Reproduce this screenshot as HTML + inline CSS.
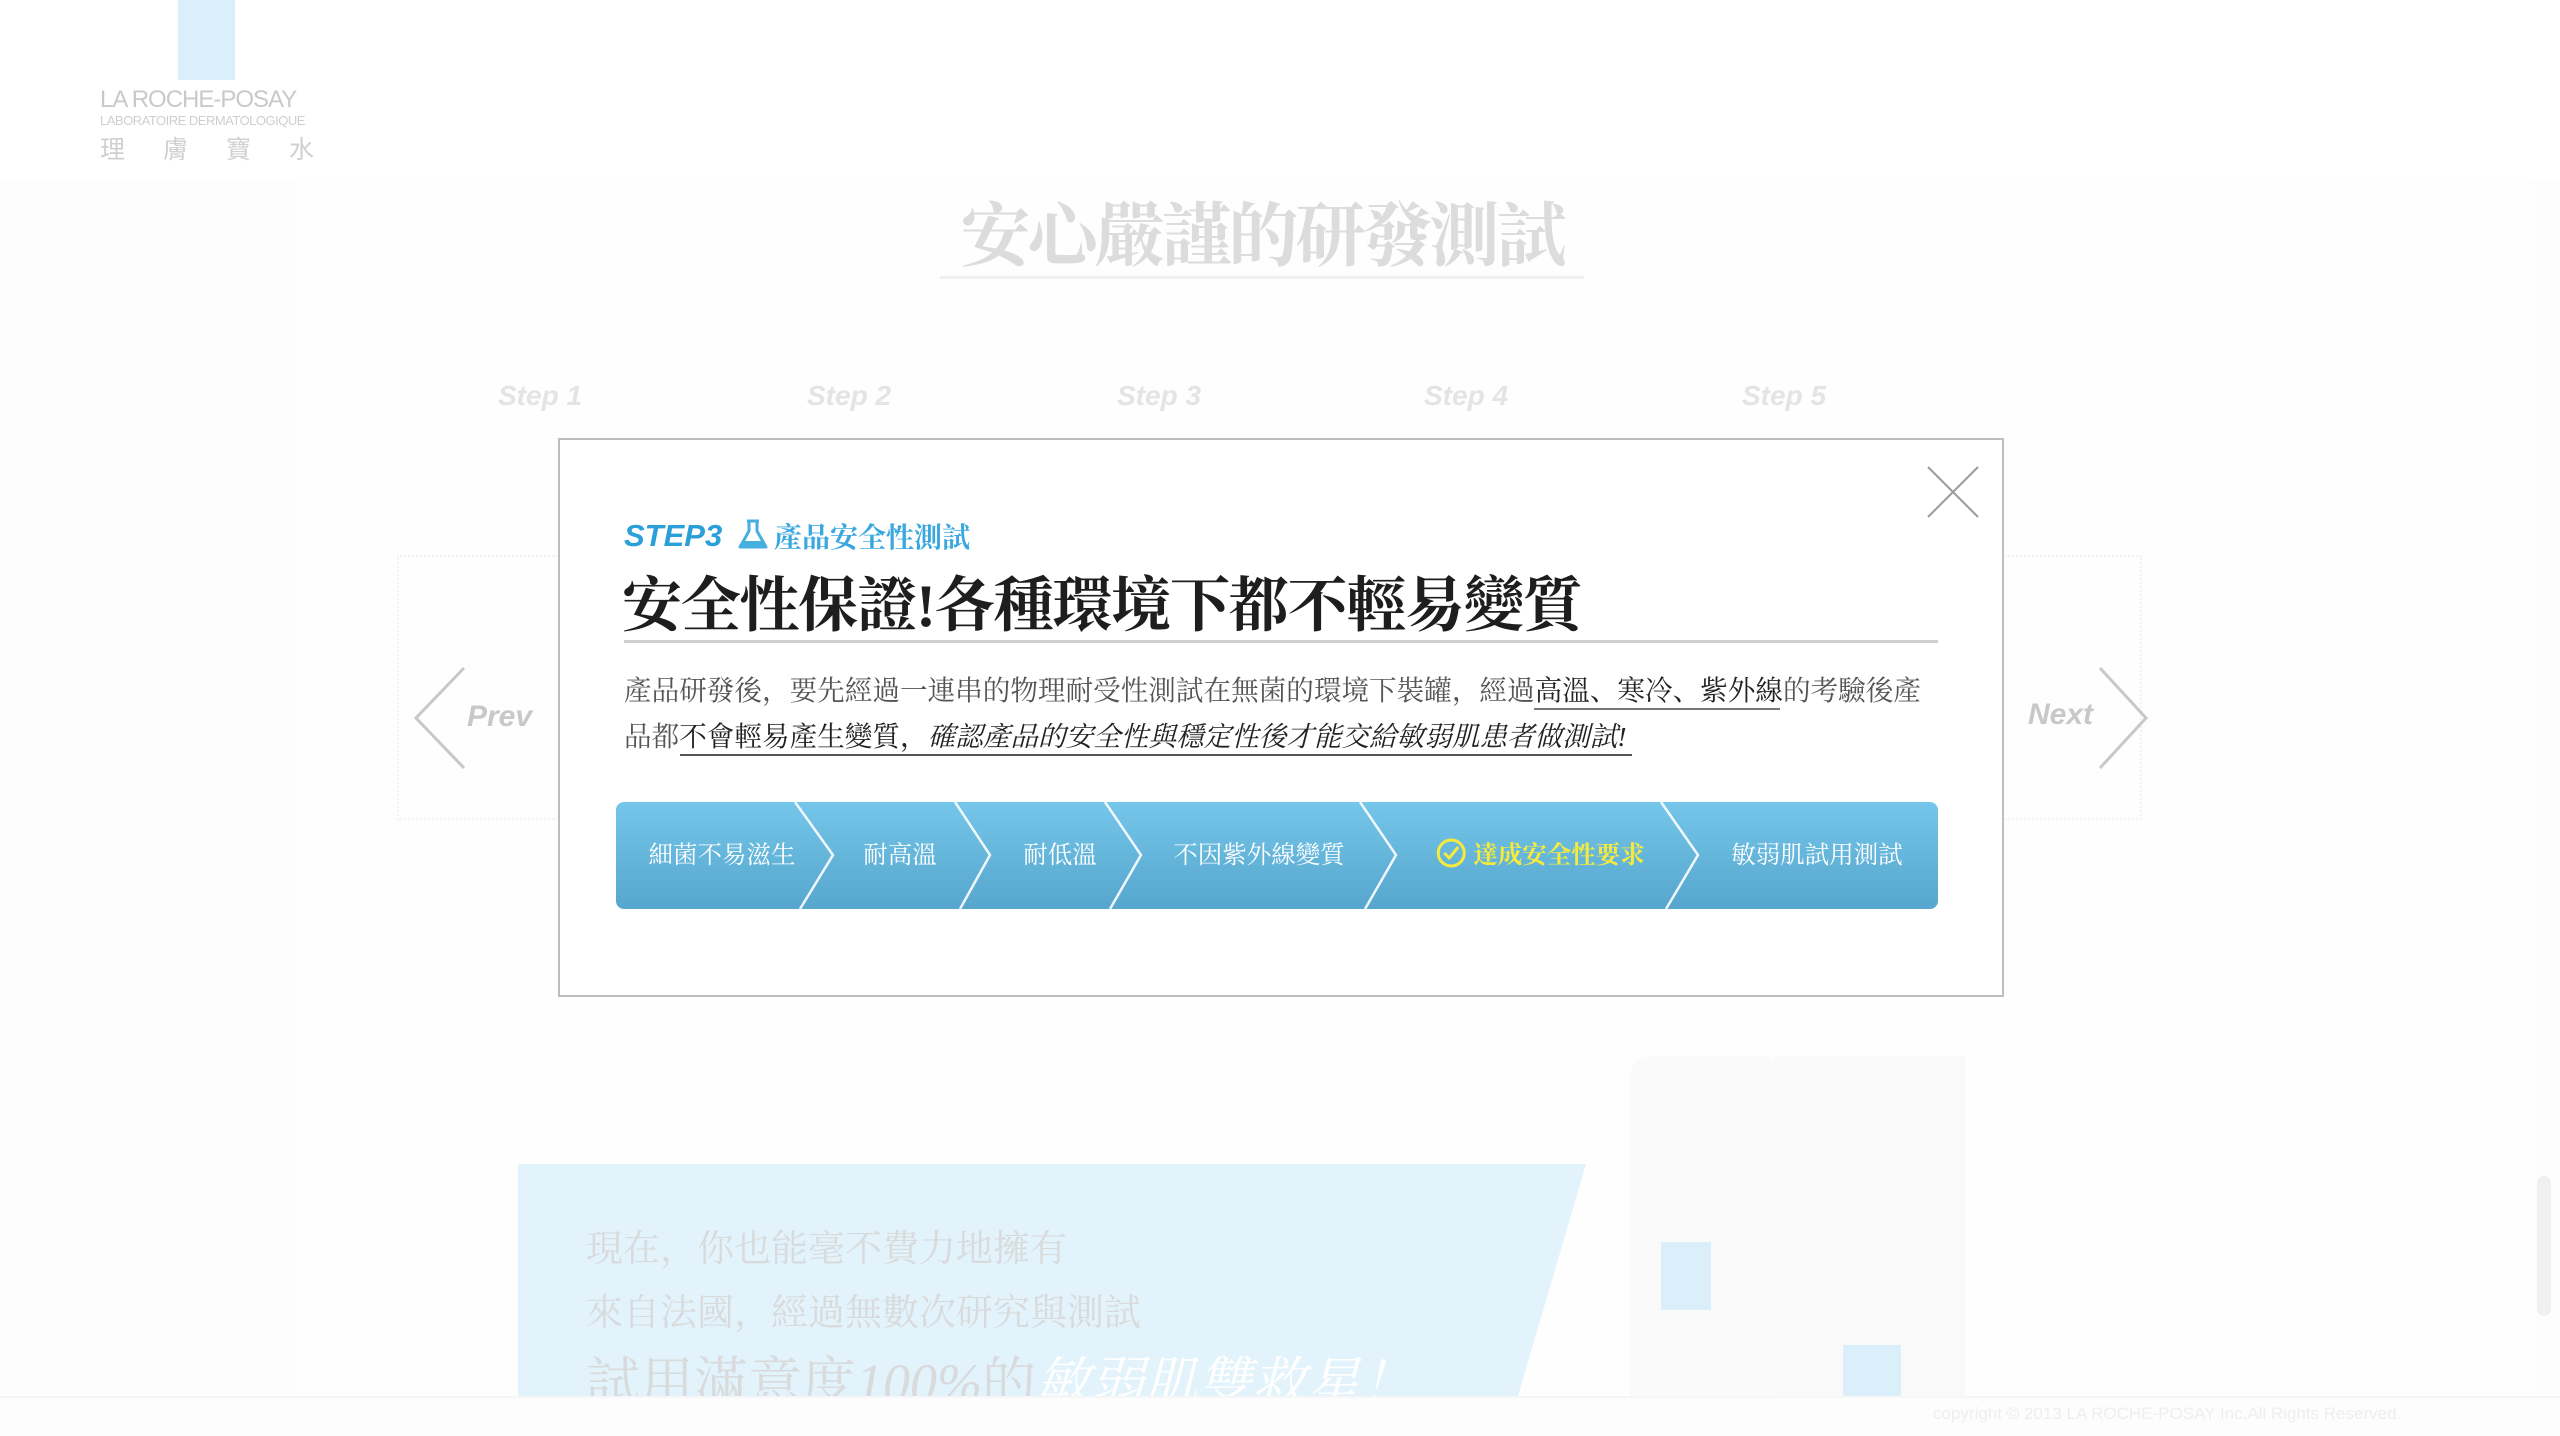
<!DOCTYPE html>
<html><head><meta charset="utf-8"><style>
html,body{margin:0;padding:0}
body{width:2560px;height:1434px;position:relative;overflow:hidden;background:#fdfdfd;font-family:"Liberation Serif","Noto Serif CJK SC","Noto Sans CJK TC",serif}
.abs{position:absolute}
.panel{left:294px;top:180px;width:2237px;height:1216px;background:#fefefe}
.step{top:380px;font:bold italic 28px "Liberation Sans",sans-serif;color:#e4e4e4}
.cj{font-family:"Liberation Serif","Noto Serif CJK SC",serif}
.seg{position:absolute;top:0;height:107px;line-height:107px;color:#fff;font-size:24.5px;text-align:center;transform:translateX(-50%);white-space:nowrap}
</style></head><body>
<div class="abs panel"></div>
<div class="abs" style="left:0;top:0;width:2560px;height:180px;background:#fff"></div>
<!-- logo -->
<div class="abs" style="left:178px;top:0;width:57px;height:80px;background:#dbeffa"></div>
<div class="abs" style="left:100px;top:86px;font:24px 'Liberation Sans',sans-serif;color:#c9c9c9;letter-spacing:-1px">LA ROCHE-POSAY</div>
<div class="abs" style="left:100px;top:113px;font:13px 'Liberation Sans',sans-serif;color:#cfcfcf;letter-spacing:-0.5px">LABORATOIRE DERMATOLOGIQUE</div>
<div class="abs" style="left:100px;top:130px;font:25px 'Noto Sans CJK TC',sans-serif;color:#d0d0d0;letter-spacing:38px">理膚寶水</div>
<!-- title -->
<div class="abs cj" style="left:940px;top:180px;width:644px;text-align:center;font-size:70px;font-weight:bold;color:#dcdcdc;letter-spacing:-3px">安心嚴謹的研發測試</div>
<div class="abs" style="left:940px;top:276px;width:644px;height:3px;background:#f0f0f0"></div>
<div class="abs step" style="left:498px">Step 1</div>
<div class="abs step" style="left:807px">Step 2</div>
<div class="abs step" style="left:1117px">Step 3</div>
<div class="abs step" style="left:1424px">Step 4</div>
<div class="abs step" style="left:1742px">Step 5</div>
<div class="abs" style="left:397px;top:555px;width:158px;height:261px;border:2px dotted #f2f2f2;border-right:none"></div>
<div class="abs" style="left:2005px;top:555px;width:135px;height:261px;border:2px dotted #f2f2f2;border-left:none"></div>
<svg class="abs" style="left:400px;top:660px" width="80" height="120"><path d="M64 8 L16 58 L64 108" fill="none" stroke="#c8c8c8" stroke-width="3"/></svg>
<div class="abs" style="left:467px;top:700px;font:bold italic 30px 'Liberation Sans',sans-serif;color:#c8c8c8">Prev</div>
<div class="abs" style="left:2028px;top:698px;font:bold italic 30px 'Liberation Sans',sans-serif;color:#c8c8c8">Next</div>
<svg class="abs" style="left:2090px;top:660px" width="80" height="120"><path d="M10 8 L56 58 L10 108" fill="none" stroke="#c8c8c8" stroke-width="3"/></svg>
<!-- bottom -->
<svg class="abs" style="left:518px;top:1164px" width="1070" height="232"><polygon points="0,0 1068,0 1000,232 0,232" fill="#e2f3fb"/></svg>
<div class="abs" style="left:1630px;top:1056px;width:150px;height:340px;background:#fafafa;border-radius:20px 20px 0 0"></div>
<div class="abs" style="left:1775px;top:1056px;width:190px;height:340px;background:#f9f9f9"></div>
<div class="abs" style="left:1661px;top:1242px;width:50px;height:68px;background:#dbeffa"></div>
<div class="abs" style="left:1843px;top:1345px;width:58px;height:51px;background:#dbeffa"></div>
<div class="abs cj" style="left:586px;top:1218px;font-size:37px;color:#d8dadb">現在，你也能毫不費力地擁有</div>
<div class="abs cj" style="left:586px;top:1282px;font-size:37px;color:#d8dadb">來自法國，經過無數次研究與測試</div>
<div class="abs cj" style="left:586px;top:1340px;font-size:54px;color:#d8dadb;white-space:nowrap">試用滿意度<i>100%</i>的<i style="color:#fff">敏弱肌雙救星！</i></div>
<div class="abs" style="left:0;top:1396px;width:2560px;height:38px;background:#fdfdfd;border-top:2px solid #f6f6f6"></div>
<div class="abs" style="left:1933px;top:1404px;font:17px 'Liberation Sans',sans-serif;color:#eeeeee">copyright © 2013 LA ROCHE-POSAY Inc.All Rights Reserved.</div>
<div class="abs" style="left:2537px;top:1176px;width:14px;height:140px;background:#f0f0f0;border-radius:7px"></div>
<!-- modal -->
<div class="abs" style="left:558px;top:438px;width:1442px;height:555px;background:#fff;border:2px solid #bdbdbd"></div>
<svg class="abs" style="left:1926px;top:465px" width="54" height="54"><path d="M2 2 L52 52 M52 2 L2 52" stroke="#9a9a9a" stroke-width="2" fill="none"/></svg>
<div class="abs" style="left:624px;top:518px;font:bold italic 31px 'Liberation Sans',sans-serif;color:#2a9fd8">STEP3</div>
<svg class="abs" style="left:737px;top:519px" width="32" height="32"><path d="M10 2 H22 M12 2 V12 L3 28 H29 L20 12 V2" fill="none" stroke="#45b0e0" stroke-width="3" stroke-linejoin="round"/><path d="M7 22 H25 L28 28 H4Z" fill="#45b0e0"/></svg>
<div class="abs cj" style="left:774px;top:516px;font-size:28px;font-weight:bold;color:#3aa8de">產品安全性測試</div>
<div class="abs cj" style="left:622px;top:558px;font-size:60px;font-weight:bold;color:#1e1e1e;letter-spacing:-1.2px;white-space:nowrap">安全性保證!各種環境下都不輕易變質</div>
<div class="abs" style="left:624px;top:640px;width:1314px;height:3px;background:#cfcfcf"></div>
<div class="abs cj" style="left:624px;top:668px;font-size:27.6px;color:#555;white-space:nowrap;line-height:46px">產品研發後，要先經過一連串的物理耐受性測試在無菌的環境下裝罐，經過<span style="color:#222">高溫、寒冷、紫外線</span>的考驗後產<br>品都<span style="color:#222">不會輕易產生變質，<i>確認產品的安全性與穩定性後才能交給敏弱肌患者做測試!</i></span></div>
<div class="abs" style="left:1534px;top:708px;width:246px;height:2px;background:#777"></div>
<div class="abs" style="left:680px;top:754px;width:952px;height:2px;background:#555"></div>
<!-- chevron bar -->
<div class="abs" style="left:616px;top:802px;width:1322px;height:107px;border-radius:8px;background:linear-gradient(#75c6ea,#56a6cd);overflow:hidden">
<svg class="abs" style="left:0;top:0" width="1322" height="107"><g fill="none" stroke="#fff" stroke-width="2.5" opacity=".9"><path d="M179 0 L217 53 L184 107"/><path d="M339 0 L374 53 L344 107"/><path d="M489 0 L525 53 L494 107"/><path d="M744 0 L780 53 L749 107"/><path d="M1045 0 L1082 53 L1050 107"/></g></svg>
<div class="seg" style="left:106px">細菌不易滋生</div>
<div class="seg" style="left:284px">耐高溫</div>
<div class="seg" style="left:444px">耐低溫</div>
<div class="seg" style="left:643px">不因紫外線變質</div>
<div class="seg" style="left:924px;color:#f6ea3c;font-weight:bold"><svg width="32" height="32" style="vertical-align:-6px;margin-right:6px"><circle cx="16" cy="16" r="13" fill="none" stroke="#f6ea3c" stroke-width="3"/><path d="M9 16 L14 21 L23 10" fill="none" stroke="#f6ea3c" stroke-width="3"/></svg>達成安全性要求</div>
<div class="seg" style="left:1201px">敏弱肌試用測試</div>
</div>
</body></html>
